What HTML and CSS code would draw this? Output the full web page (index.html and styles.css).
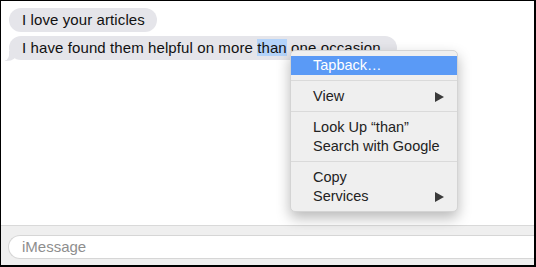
FILE: index.html
```html
<!DOCTYPE html>
<html>
<head>
<meta charset="utf-8">
<link rel="stylesheet" href="styles.css">
</head>
<body>
<div class="frame">
  <div class="thread">
    <div class="bubble">I love your articles</div>
    <div class="bubble tail">I have found them helpful on more <span class="sel">than</span> one occasion.</div>
    <div class="menu">
      <div class="item active">Tapback…</div>
      <div class="sep"></div>
      <div class="item sub">View<span class="arrow"></span></div>
      <div class="sep"></div>
      <div class="item">Look Up “than”</div>
      <div class="item">Search with Google</div>
      <div class="sep"></div>
      <div class="item">Copy</div>
      <div class="item sub">Services<span class="arrow"></span></div>
    </div>
  </div>
  <div class="composer">
    <div class="field">iMessage</div>
  </div>
</div>
</body>
</html>
```

FILE: styles.css
```css
html, body {
  margin: 0;
  padding: 0;
  background: #000;
}
body {
  width: 536px;
  height: 267px;
  overflow: hidden;
  font-family: "Liberation Sans", Arial, sans-serif;
}
.frame {
  box-sizing: border-box;
  width: 536px;
  height: 267px;
  border-style: solid;
  border-color: #000;
  border-width: 1px 2px 2px 1px;
  background: #fff;
  display: flex;
  flex-direction: column;
}
.thread {
  position: relative;
  flex: 1;
  padding: 7px 0 0 8px;
  display: flex;
  flex-direction: column;
  align-items: flex-start;
  gap: 4px;
}
.bubble {
  position: relative;
  background: #e5e5ea;
  color: #111;
  font-size: 15px;
  letter-spacing: 0.1px;
  line-height: 24px;
  height: 24px;
  padding: 0 12px 0 13px;
  border-radius: 12px;
  white-space: nowrap;
}
.bubble.tail::before {
  content: "";
  position: absolute;
  left: -4px;
  bottom: -1px;
  width: 12px;
  height: 10px;
  background: #e5e5ea;
  border-bottom-right-radius: 10px 8px;
}
.bubble.tail::after {
  content: "";
  position: absolute;
  left: -8px;
  bottom: -1px;
  width: 8px;
  height: 10px;
  background: #fff;
  border-bottom-right-radius: 6px 6px;
}
.sel {
  background: #b4d3f9;
}
.menu {
  position: absolute;
  left: 289px;
  top: 49px;
  width: 168px;
  box-sizing: border-box;
  padding: 5px 0 5px;
  background: #efefef;
  border: 1px solid #d4d4d4;
  border-radius: 5px;
  box-shadow: 0 6px 14px rgba(0,0,0,0.28);
}
.item {
  position: relative;
  height: 19px;
  line-height: 19px;
  padding-left: 22px;
  font-size: 14.5px;
  color: #222;
}
.item.active {
  background: #5a9af6;
  color: #fff;
}
.sep {
  height: 1px;
  background: #dadada;
  margin: 5px 0 6px;
}
.arrow {
  position: absolute;
  right: 13px;
  top: 5px;
  width: 0;
  height: 0;
  border-left: 9px solid #3a3a3a;
  border-top: 5px solid transparent;
  border-bottom: 5px solid transparent;
}
.composer {
  height: 40px;
  background: #efefef;
  border-top: 1px solid #d9d9d9;
  padding: 9px 0 6px 7px;
  box-sizing: border-box;
  display: flex;
}
.field {
  flex: 1;
  background: #fff;
  border: 1px solid #d6d6d6;
  border-right: none;
  border-radius: 12px 0 0 12px;
  font-size: 15px;
  line-height: 22px;
  color: #8e8e8e;
  padding-left: 13px;
}
```
